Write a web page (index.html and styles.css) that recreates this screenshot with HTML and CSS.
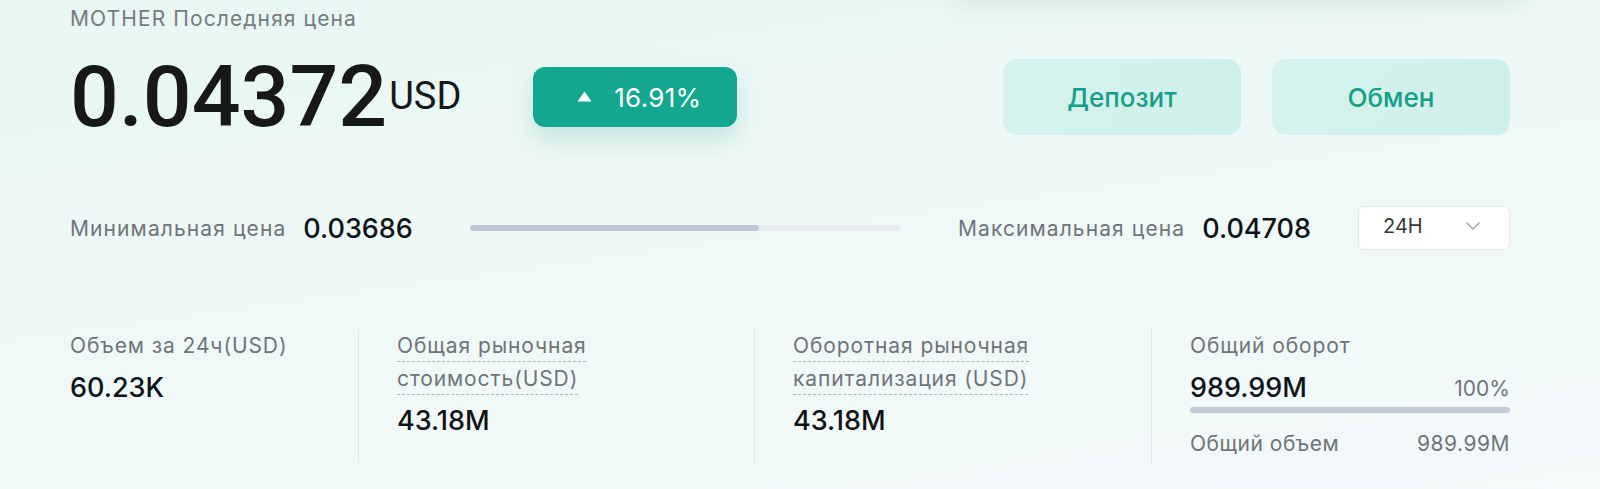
FILE: index.html
```html
<!DOCTYPE html>
<html lang="ru">
<head>
<meta charset="utf-8">
<title>MOTHER</title>
<link rel="stylesheet" href="styles.css">
</head>
<body>
<div class="page">
  <div class="top-card"></div>
  <div class="head-label">MOTHER Последняя цена</div>

  <div class="price-row">
    <div class="price">
      <span class="price-num">0.04372</span>
      <span class="price-cur">USD</span>
    </div>
    <div class="badge">
      <svg class="badge-arrow" width="15" height="11" viewBox="0 0 15 11"><path d="M7.5 0.5 L14.5 10.5 L0.5 10.5 Z" fill="#ffffff"/></svg>
      <span>16.91%</span>
    </div>
    <div class="actions">
      <button class="btn">Депозит</button>
      <button class="btn">Обмен</button>
    </div>
  </div>

  <div class="range-row">
    <span class="range-label">Минимальная цена</span>
    <span class="range-value">0.03686</span>
    <div class="range-bar"><div class="range-fill" style="width:67%"></div></div>
    <span class="range-label">Максимальная цена</span>
    <span class="range-value">0.04708</span>
    <div class="select">
      <span>24H</span>
      <svg width="16" height="10" viewBox="0 0 16 10"><path d="M1.5 1.5 L8 8 L14.5 1.5" fill="none" stroke="#a9aeb5" stroke-width="1.6"/></svg>
    </div>
  </div>

  <div class="stats">
    <div class="stat">
      <div class="stat-label">Объем за 24ч(USD)</div>
      <div class="stat-value">60.23K</div>
    </div>
    <div class="stat">
      <div class="stat-label"><span class="dashed">Общая рыночная стоимость(USD)</span></div>
      <div class="stat-value">43.18M</div>
    </div>
    <div class="stat">
      <div class="stat-label"><span class="dashed">Оборотная рыночная капитализация (USD)</span></div>
      <div class="stat-value">43.18M</div>
    </div>
    <div class="stat">
      <div class="stat-label">Общий оборот</div>
      <div class="supply-row">
        <span class="stat-value">989.99M</span>
        <span class="supply-pct">100%</span>
      </div>
      <div class="supply-bar"></div>
      <div class="supply-total">
        <span>Общий объем</span>
        <span>989.99M</span>
      </div>
    </div>
  </div>
</div>
</body>
</html>
```

FILE: styles.css
```css
html, body {
  margin: 0;
  padding: 0;
}

body {
  width: 1600px;
  height: 489px;
  overflow: hidden;
  background: linear-gradient(172deg, #e7f7f3 0%, #eef9f7 45%, #f4f9fa 100%);
  font-family: "Inter", "Roboto", sans-serif;
  color: #111417;
}

.page {
  position: relative;
  padding: 7px 90px 0 70px;
}

.top-card {
  position: absolute;
  top: -70px;
  left: 950px;
  width: 580px;
  height: 70px;
  border-radius: 16px;
  background: #eaf7f4;
  box-shadow: 0 5px 22px rgba(60, 90, 85, 0.09);
}

.head-label {
  font-size: 21px;
  line-height: 24px;
  letter-spacing: 1.1px;
  color: #767b80;
}

.price-row {
  display: flex;
  align-items: center;
  margin-top: 28px;
  height: 76px;
}

.price {
  display: flex;
  align-items: center;
}

.price-num {
  font-family: "Roboto", sans-serif;
  font-weight: 500;
  font-size: 86px;
  line-height: 86px;
  color: #161819;
}

.price-cur {
  font-family: "Roboto", sans-serif;
  font-size: 38px;
  line-height: 40px;
  margin-left: 2px;
  margin-top: -3px;
  color: #161819;
}

.badge {
  margin-left: 72px;
  width: 204px;
  height: 60px;
  box-sizing: border-box;
  padding-left: 8px;
  border-radius: 12px;
  background: #12a78e;
  box-shadow: 0 12px 26px rgba(18, 140, 110, 0.18);
  display: flex;
  align-items: center;
  justify-content: center;
  gap: 22px;
  color: #ffffff;
  font-size: 26px;
  letter-spacing: 0.3px;
}

.badge-arrow {
  margin-top: -2px;
}

.actions {
  margin-left: auto;
  display: flex;
  gap: 31px;
}

.btn {
  width: 238px;
  height: 76px;
  border: none;
  border-radius: 14px;
  background: linear-gradient(100deg, #d5f3ec 0%, #cfefe9 100%);
  font-family: "Inter", "Roboto", sans-serif;
  font-size: 26px;
  font-weight: 500;
  color: #14a086;
  padding: 0;
}

.range-row {
  display: flex;
  align-items: center;
  margin-top: 71px;
  height: 44px;
}

.range-label {
  font-size: 21px;
  letter-spacing: 1.1px;
  color: #6f7479;
}

.range-value {
  margin-left: 17px;
  font-size: 27px;
  font-weight: 500;
  color: #111417;
}

.range-bar {
  flex: 1;
  margin: 0 57px;
  height: 6px;
  border-radius: 3px;
  background: #e6ebf0;
  overflow: hidden;
}

.range-fill {
  height: 100%;
  border-radius: 3px;
  background: #c0c5d4;
}

.select {
  margin-left: 47px;
  width: 152px;
  height: 44px;
  box-sizing: border-box;
  border: 1px solid #e4e8ea;
  border-radius: 6px;
  background: #ffffff;
  display: flex;
  align-items: center;
  justify-content: space-between;
  padding: 0 28px 4px 24px;
  font-size: 20px;
  color: #34383c;
}

.stats {
  display: grid;
  grid-template-columns: 288px 396px 397px 1fr;
  margin-top: 79px;
}

.stat {
  height: 134px;
  box-sizing: border-box;
}

.stat + .stat {
  border-left: 1px solid #e2e6e8;
  padding-left: 38px;
}

.stat-label {
  font-size: 21px;
  line-height: 33px;
  letter-spacing: 0.9px;
  color: #6f7479;
}

.dashed {
  text-decoration: underline dashed #b3b7bc;
  text-decoration-thickness: 1px;
  text-underline-offset: 8px;
}

.stat:nth-child(2) .stat-label {
  width: 210px;
}

.stat:nth-child(3) .stat-label {
  width: 260px;
}

.stat-value {
  display: block;
  margin-top: 9px;
  font-size: 27px;
  line-height: 34px;
  font-weight: 500;
  color: #111417;
}

.supply-row {
  display: flex;
  justify-content: space-between;
  align-items: center;
  margin-top: 9px;
}

.supply-row .stat-value {
  margin-top: 0;
}

.supply-pct {
  font-size: 21px;
  color: #6f7479;
}

.supply-bar {
  margin-top: 2px;
  height: 6px;
  border-radius: 3px;
  background: #c3c8d6;
}

.supply-total {
  display: flex;
  justify-content: space-between;
  margin-top: 17px;
  font-size: 21px;
  line-height: 28px;
  letter-spacing: 0.5px;
  color: #6f7479;
}
```
